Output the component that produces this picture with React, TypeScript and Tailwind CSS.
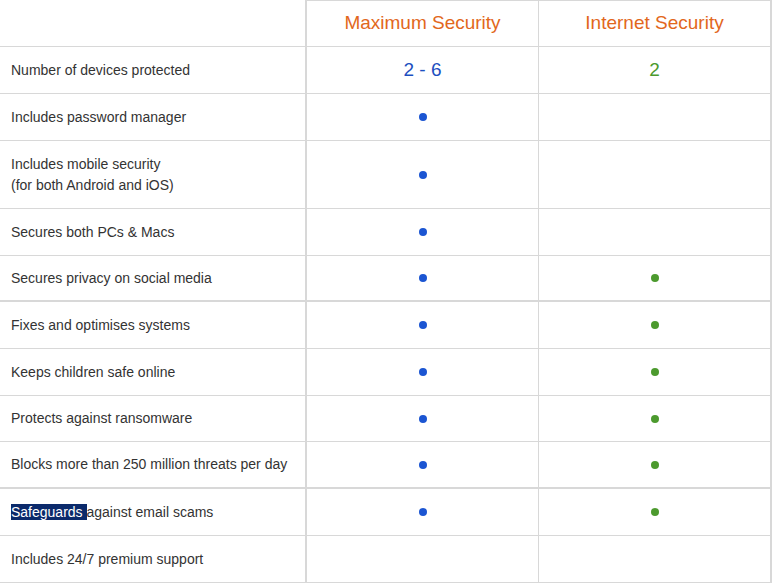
import React from 'react';

type Mark = 'dot' | 'none' | string;

interface Row {
  label: React.ReactNode;
  max: Mark;
  internet: Mark;
  h: string;
  thick?: boolean;
}

const rows: Row[] = [
  { label: 'Number of devices protected', max: '2 - 6', internet: '2', h: 'h-[47px]' },
  { label: 'Includes password manager', max: 'dot', internet: 'none', h: 'h-[47px]' },
  {
    label: (
      <>
        Includes mobile security
        <br />
        (for both Android and iOS)
      </>
    ),
    max: 'dot',
    internet: 'none',
    h: 'h-[68px]',
  },
  { label: 'Secures both PCs & Macs', max: 'dot', internet: 'none', h: 'h-[47px]' },
  { label: 'Secures privacy on social media', max: 'dot', internet: 'dot', h: 'h-[46px]', thick: true },
  { label: 'Fixes and optimises systems', max: 'dot', internet: 'dot', h: 'h-[47px]' },
  { label: 'Keeps children safe online', max: 'dot', internet: 'dot', h: 'h-[47px]' },
  { label: 'Protects against ransomware', max: 'dot', internet: 'dot', h: 'h-[46px]' },
  { label: 'Blocks more than 250 million threats per day', max: 'dot', internet: 'dot', h: 'h-[47px]', thick: true },
  {
    label: (
      <>
        <span className="bg-[#0b2a6b] text-white">Safeguards </span>against email scams
      </>
    ),
    max: 'dot',
    internet: 'dot',
    h: 'h-[47px]',
  },
  { label: 'Includes 24/7 premium support', max: 'none', internet: 'none', h: 'h-[47px]' },
];

const Cell = ({ mark, tone }: { mark: Mark; tone: 'blue' | 'green' }) => {
  if (mark === 'none') return null;
  if (mark === 'dot') {
    return (
      <span
        className={
          tone === 'blue'
            ? 'block w-2 h-2 rounded-full bg-[#1b55d2]'
            : 'block w-2 h-2 rounded-full bg-[#4c9a2e]'
        }
      />
    );
  }
  return (
    <span className={tone === 'blue' ? 'text-[19px] text-[#1d4fc0]' : 'text-[19px] text-[#4c9a2e]'}>
      {mark}
    </span>
  );
};

export default function App() {
  return (
    <div className="w-[780px] h-[584px] bg-white overflow-hidden font-['Liberation_Sans',Arial,sans-serif] text-[#333]">
      <div className="grid grid-cols-[305px_234px_233px]">
        {/* header */}
        <div className="h-[47px] border-b border-[#d8d8d8]" />
        <div className="h-[47px] flex items-center justify-center border-t border-b border-l-2 border-r border-[#d8d8d8] text-[19px] text-[#e2671c]">
          Maximum Security
        </div>
        <div className="h-[47px] flex items-center justify-center border-t border-b border-r-2 border-[#d8d8d8] text-[19px] text-[#e2671c]">
          Internet Security
        </div>

        {rows.map((row, i) => {
          const b = row.thick ? 'border-b-2' : 'border-b';
          return (
            <React.Fragment key={i}>
              <div className={`${row.h} ${b} border-[#d8d8d8] flex items-center pl-[11px] text-[14px] leading-[21px]`}>
                <div>{row.label}</div>
              </div>
              <div className={`${row.h} ${b} border-l-2 border-r border-[#d8d8d8] flex items-center justify-center`}>
                <Cell mark={row.max} tone="blue" />
              </div>
              <div className={`${row.h} ${b} border-r-2 border-[#d8d8d8] flex items-center justify-center`}>
                <Cell mark={row.internet} tone="green" />
              </div>
            </React.Fragment>
          );
        })}
      </div>
    </div>
  );
}
